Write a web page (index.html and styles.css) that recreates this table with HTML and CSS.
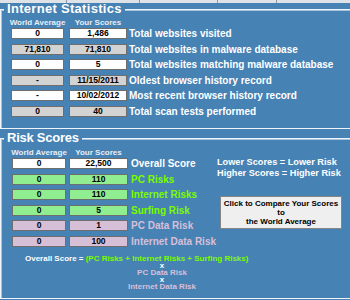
FILE: index.html
```html
<!DOCTYPE html>
<html lang="en">
<head>
<meta charset="utf-8">
<title>Scan Results</title>
<link rel="stylesheet" href="styles.css">
</head>
<body>
<div class="tabs">
  <span class="tab tab-a"></span>
  <span class="tab tab-b"></span>
  <span class="tab tab-c"></span>
  <span class="tab tab-d"></span>
  <span class="tab tab-e"></span>
</div>

<fieldset class="group stats">
  <legend class="legend-stats">Internet Statistics</legend>
  <div class="body stats-body">
    <div class="heads stats-heads"><span>World Average</span><span>Your Scores</span></div>
    <div class="table stats-table">
      <div class="box world white">0</div><div class="box your white">1,486</div><div class="label">Total websites visited</div>
      <div class="box world gray">71,810</div><div class="box your gray">71,810</div><div class="label">Total websites in malware database</div>
      <div class="box world white">0</div><div class="box your white">5</div><div class="label">Total websites matching malware database</div>
      <div class="box world gray">-</div><div class="box your gray">11/15/2011</div><div class="label">Oldest browser history record</div>
      <div class="box world white">-</div><div class="box your white">10/02/2012</div><div class="label">Most recent browser history record</div>
      <div class="box world gray">0</div><div class="box your gray">40</div><div class="label">Total scan tests performed</div>
    </div>
  </div>
</fieldset>

<fieldset class="group risk">
  <legend class="legend-risk">Risk Scores</legend>
  <div class="body risk-body">
    <div class="heads risk-heads"><span>World Average</span><span>Your Scores</span></div>
    <div class="table risk-table">
      <div class="box world white">0</div><div class="box your white">22,500</div><div class="label t-white">Overall Score</div>
      <div class="notes">Lower Scores = Lower Risk<br>Higher Scores = Higher Risk</div>
      <div class="box world green">0</div><div class="box your green">110</div><div class="label t-green">PC Risks</div>
      <div class="box world green">0</div><div class="box your green">110</div><div class="label t-green">Internet Risks</div>
      <button class="compare" type="button">Click to Compare Your Scores<br>to<br>the World Average</button>
      <div class="box world green">0</div><div class="box your green">5</div><div class="label t-green">Surfing Risk</div>
      <div class="box world thistle">0</div><div class="box your thistle">1</div><div class="label t-lav">PC Data Risk</div>
      <div class="box world thistle">0</div><div class="box your thistle">100</div><div class="label t-lav">Internet Data Risk</div>
    </div>
    <div class="formula">
      <div class="f-line"><span class="t-white">Overall Score = </span><span class="t-green">(PC Risks + Internet Risks + Surfing Risks)</span></div>
      <div class="stack">
        <div class="t-white">x</div>
        <div class="t-lav">PC Data Risk</div>
        <div class="t-white">x</div>
        <div class="t-lav">Internet Data Risk</div>
      </div>
    </div>
  </div>
</fieldset>
</body>
</html>
```

FILE: styles.css
```css
html, body {
  margin: 0;
  padding: 0;
  background: #4682b4;
}

body {
  width: 350px;
  height: 300px;
  overflow: hidden;
  font-family: "Liberation Sans", Arial, sans-serif;
  font-weight: bold;
}

/* tab strip at the very top */
.tabs {
  display: flex;
  height: 3px;
  background: #dfe3e8;
}
.tab {
  box-sizing: border-box;
  height: 3px;
  border-right: 1px solid #8e98a4;
}
.tab-a { width: 67px; }
.tab-b { width: 73px; }
.tab-c { width: 78px; }
.tab-d { width: 59px; }
.tab-e { flex: 1; border-right: none; }

/* group boxes */
.group {
  margin: 0;
  padding: 0;
  min-width: 0;
  border: 1px solid #eef4fa;
  border-right: none;
  box-shadow: inset 0 1px 0 #a9c4de, inset 1px 0 0 #a9c4de;
}
.group legend {
  margin-left: 3px;
  padding: 0 3px;
  font-size: 13px;
  line-height: 12px;
  color: #fff;
  background: #4682b4;
  white-space: nowrap;
}
.legend-stats { letter-spacing: 0.3px; }
.legend-risk { letter-spacing: -0.25px; }

.risk { margin-top: 3px; }

.stats-body { padding: 3px 0 11.5px 10px; }
.risk-body { padding: 4px 0 7.5px 11px; }

/* column headers */
.heads {
  display: grid;
  font-size: 8px;
  line-height: 10px;
  color: #e8eef4;
}
.heads span {
  display: flex;
  justify-content: center;
  white-space: nowrap;
}
.stats-heads { grid-template-columns: 53px 58px; column-gap: 5px; }
.risk-heads { grid-template-columns: 54px 59px; column-gap: 3px; }

/* value rows */
.table {
  display: grid;
  grid-auto-rows: 11px;
  row-gap: 4.5px;
  align-items: center;
}
.stats-table { grid-template-columns: 58px 60px 1fr; }
.stats-table .world { margin-right: 5px; }
.stats-table .your { margin-right: 2px; }

.risk-table { grid-template-columns: 57px 62px 86px 1fr; }
.risk-table .world { margin-right: 3px; }
.risk-table .your { margin-right: 3px; }

.box {
  box-sizing: border-box;
  height: 11px;
  border: 1px solid #6e6e6e;
  font-size: 8.5px;
  line-height: 9px;
  text-align: center;
  color: #000;
  white-space: nowrap;
}
.white { background: #ffffff; }
.gray { background: #d3d3d3; }
.green { background: #90ee90; }
.thistle { background: #d8bfd8; }

.label {
  font-size: 10px;
  line-height: 11px;
  color: #fff;
  white-space: nowrap;
}

.t-white { color: #ffffff; }
.t-green { color: #7cfc00; }
.t-lav { color: #d8bfd8; }

.notes {
  grid-column: 4;
  grid-row: 1 / span 2;
  align-self: start;
  margin-top: -1px;
  font-size: 9.2px;
  line-height: 11px;
  color: #fff;
  white-space: nowrap;
}

.compare {
  grid-column: 4;
  grid-row: 3 / span 3;
  align-self: start;
  box-sizing: border-box;
  width: 122px;
  margin: 7px 0 0 3px;
  padding: 2px 0;
  border: 1px solid #858585;
  border-radius: 0;
  background: #efefef;
  font-family: "Liberation Sans", Arial, sans-serif;
  font-weight: bold;
  font-size: 8px;
  line-height: 9px;
  color: #000;
  text-align: center;
}

/* formula */
.formula {
  margin-top: 8px;
  padding-left: 13px;
  font-size: 8px;
  line-height: 7.2px;
  white-space: nowrap;
}
.stack {
  width: 274px;
  text-align: center;
}
```
